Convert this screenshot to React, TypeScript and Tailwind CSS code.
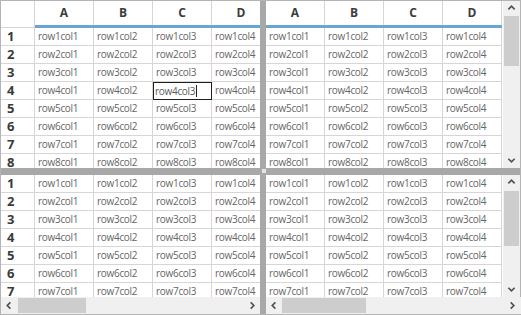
import React from "react";

const COLS = ["A", "B", "C", "D"];
const FONT = { fontFamily: '"Open Sans", "Noto Sans", sans-serif' };

type Dir = "up" | "down" | "left" | "right";

const Arrow = ({ dir }: { dir: Dir }) => {
  const d = {
    up: "M1.5 6 L5 2.5 L8.5 6",
    down: "M1.5 3 L5 6.5 L8.5 3",
    left: "M6 1.5 L2.5 5 L6 8.5",
    right: "M3 1.5 L6.5 5 L3 8.5",
  }[dir];
  return (
    <svg width="9" height="9" viewBox="0 0 10 10" fill="none">
      <path d={d} stroke="#505050" strokeWidth="1.8" />
    </svg>
  );
};

const VScroll = ({ thumbTop, thumbH }: { thumbTop: number; thumbH: number }) => (
  <div className="flex h-full w-[17px] shrink-0 flex-col bg-[#f0f0f0]">
    <div className="flex h-[15px] shrink-0 items-center justify-center">
      <Arrow dir="up" />
    </div>
    <div className="relative flex-1">
      <div
        className="absolute left-[1px] right-[1px] bg-[#cdcdcd]"
        style={{ top: thumbTop, height: thumbH }}
      />
    </div>
    <div className="flex h-[15px] shrink-0 items-center justify-center">
      <Arrow dir="down" />
    </div>
  </div>
);

const HScroll = ({ thumbLeft, thumbW }: { thumbLeft: number; thumbW: number }) => (
  <div className="flex h-[17px] w-full shrink-0 flex-row bg-[#f0f0f0]">
    <div className="flex w-[16px] shrink-0 items-center justify-center">
      <Arrow dir="left" />
    </div>
    <div className="relative flex-1">
      <div
        className="absolute top-[1px] bottom-[1px] bg-[#cdcdcd]"
        style={{ left: thumbLeft, width: thumbW }}
      />
    </div>
    <div className="flex w-[16px] shrink-0 items-center justify-center">
      <Arrow dir="right" />
    </div>
  </div>
);

const Grid = ({
  header,
  rowHeader,
  rows,
  selected,
}: {
  header?: boolean;
  rowHeader?: boolean;
  rows: number;
  selected?: [number, number];
}) => (
  <div className="flex min-h-0 min-w-0 flex-1 flex-col overflow-hidden bg-white" style={FONT}>
    {header && (
      <div className="flex shrink-0 flex-row">
        {rowHeader && (
          <div className="h-[27px] w-[34px] shrink-0 border-r border-b border-[#d6d6d6]" />
        )}
        {COLS.map((c) => (
          <div key={c} className="flex w-[59px] shrink-0 flex-col">
            <div className="flex h-[24px] items-center justify-center border-r border-[#d6d6d6] text-[12px] font-bold text-[#3c3c3c]">
              {c}
            </div>
            <div className="h-[3px] bg-[#6aa6d2]" />
          </div>
        ))}
      </div>
    )}
    {Array.from({ length: rows }, (_, i) => i + 1).map((r) => (
      <div key={r} className="flex h-[18px] shrink-0 flex-row">
        {rowHeader && (
          <div className="flex w-[34px] shrink-0 items-center border-r border-b border-[#d6d6d6] pl-[6px] text-[13px] font-bold text-[#3a3a3a]">
            {r}
          </div>
        )}
        {COLS.map((_, ci) => {
          const isSel = selected && selected[0] === r && selected[1] === ci + 1;
          return isSel ? (
            <div
              key={ci}
              className="flex w-[59px] shrink-0 items-center whitespace-nowrap border border-[#1e1e1e] pl-[1px] text-[10px] tracking-[-0.3px] text-[#5a5a5a]"
            >
              row{r}col{ci + 1}
              <span className="ml-[1px] h-[12px] w-px bg-[#222]" />
            </div>
          ) : (
            <div
              key={ci}
              className="flex w-[59px] shrink-0 items-center whitespace-nowrap border-r border-b border-[#d6d6d6] pl-[3px] text-[10px] tracking-[-0.3px] text-[#666666]"
            >
              row{r}col{ci + 1}
            </div>
          );
        })}
      </div>
    ))}
  </div>
);

export default function App() {
  return (
    <div className="flex h-[315px] w-[521px] flex-col border border-[#b4b4b4] bg-white">
      {/* top panes */}
      <div className="flex h-[167px] shrink-0 flex-row">
        <div className="flex w-[259px] shrink-0">
          <Grid header rowHeader rows={8} selected={[4, 3]} />
        </div>
        <div className="w-[6px] shrink-0 bg-[#a8a8a8]" />
        <div className="flex min-w-0 flex-1 flex-row">
          <Grid header rows={8} />
          <VScroll thumbTop={0} thumbH={50} />
        </div>
      </div>
      {/* splitter */}
      <div className="relative h-[7px] shrink-0 bg-[#a8a8a8]">
        <div className="absolute left-[261px] top-[1px] h-[4px] w-[4px] bg-[#e4e4e4]" />
      </div>
      {/* bottom panes */}
      <div className="flex min-h-0 flex-1 flex-row">
        <div className="flex w-[259px] shrink-0 flex-col">
          <Grid rowHeader rows={7} />
          <HScroll thumbLeft={1} thumbW={68} />
        </div>
        <div className="w-[6px] shrink-0 bg-[#a8a8a8]" />
        <div className="flex min-w-0 flex-1 flex-col">
          <div className="flex min-h-0 flex-1 flex-row">
            <Grid rows={7} />
            <VScroll thumbTop={1} thumbH={55} />
          </div>
          <div className="flex flex-row">
            <HScroll thumbLeft={0} thumbW={84} />
            <div className="h-[17px] w-[17px] shrink-0 bg-[#f0f0f0]" />
          </div>
        </div>
      </div>
    </div>
  );
}
